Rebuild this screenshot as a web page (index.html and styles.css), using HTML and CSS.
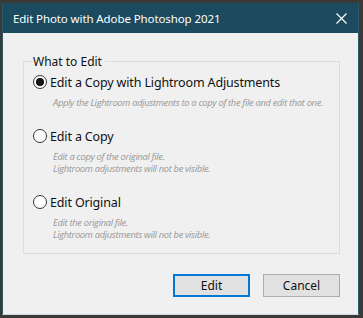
FILE: index.html
```html
<!DOCTYPE html>
<html lang="en">
<head>
    <meta charset="UTF-8">
    <title>Edit Photo with Adobe Photoshop 2021</title>
    <link rel="stylesheet" href="styles.css">
</head>
<body>
    <div class="window">
        <div class="titlebar">
            <span class="title">Edit Photo with Adobe Photoshop 2021</span>
            <svg class="close" width="11" height="11" viewBox="0 0 11 11">
                <path d="M0.5 0.5 L10.5 10.5 M10.5 0.5 L0.5 10.5" stroke="#fff" stroke-width="1.2"/>
            </svg>
        </div>
        <div class="content">
            <fieldset class="group">
                <legend>What to Edit</legend>

                <label class="option">
                    <span class="radio checked"></span>
                    <span class="label">Edit a Copy with Lightroom Adjustments</span>
                </label>
                <p class="desc">Apply the Lightroom adjustments to a copy of the file and edit that one.</p>

                <label class="option">
                    <span class="radio"></span>
                    <span class="label">Edit a Copy</span>
                </label>
                <p class="desc">Edit a copy of the original file.<br>Lightroom adjustments will not be visible.</p>

                <label class="option">
                    <span class="radio"></span>
                    <span class="label">Edit Original</span>
                </label>
                <p class="desc">Edit the original file.<br>Lightroom adjustments will not be visible.</p>
            </fieldset>

            <div class="buttons">
                <button class="btn default">Edit</button>
                <button class="btn">Cancel</button>
            </div>
        </div>
    </div>
</body>
</html>
```

FILE: styles.css
```css
* {
    margin: 0;
    padding: 0;
    box-sizing: border-box;
}

body {
    width: 363px;
    height: 318px;
    background: #3b3a36;
    font-family: 'Noto Sans', 'Open Sans', sans-serif;
    overflow: hidden;
    padding: 3px 0 0 2px;
}

.window {
    width: 357px;
    height: 312px;
    background: #f0f0f0;
    border: 1px solid #2a5a70;
    border-top: none;
    border-bottom-color: #c9dbe6;
    display: flex;
    flex-direction: column;
}

.titlebar {
    height: 30px;
    background: #1c4a5e;
    color: #fff;
    display: flex;
    align-items: center;
    justify-content: space-between;
    padding: 0 11px 0 10px;
}

.title {
    font-size: 11.5px;
    letter-spacing: -0.1px;
}

.close {
    display: block;
}

.content {
    padding: 21px 18px 0 20px;
}

.group {
    border: 1px solid #dcdcdc;
    height: 200px;
    padding: 0 0 0 9px;
}

.group legend {
    font-size: 12px;
    color: #111;
    padding: 0 3px 0 0;
    line-height: 15px;
}

.option {
    display: flex;
    align-items: center;
    gap: 3px;
    margin-top: 4px;
    height: 18px;
}

.option + .desc + .option {
    margin-top: 18px;
}

.radio {
    width: 14px;
    height: 14px;
    border: 1px solid #333;
    border-radius: 50%;
    background: #fff;
    display: flex;
    align-items: center;
    justify-content: center;
}

.radio.checked::after {
    content: '';
    width: 8px;
    height: 8px;
    border-radius: 50%;
    background: #111;
}

.label {
    font-size: 12.5px;
    color: #111;
    letter-spacing: -0.15px;
}

.desc {
    font-family: 'Open Sans', sans-serif;
    font-style: italic;
    font-size: 9.3px;
    line-height: 12px;
    color: #979797;
    margin: 6px 0 0 20px;
    letter-spacing: -0.3px;
}

.buttons {
    display: flex;
    justify-content: flex-end;
    gap: 13px;
    margin-top: 20px;
}

.btn {
    width: 77px;
    height: 23px;
    background: #e1e1e1;
    border: 1px solid #adadad;
    font-family: inherit;
    font-size: 12px;
    color: #111;
}

.btn.default {
    border: 2px solid #0078d7;
}
```
